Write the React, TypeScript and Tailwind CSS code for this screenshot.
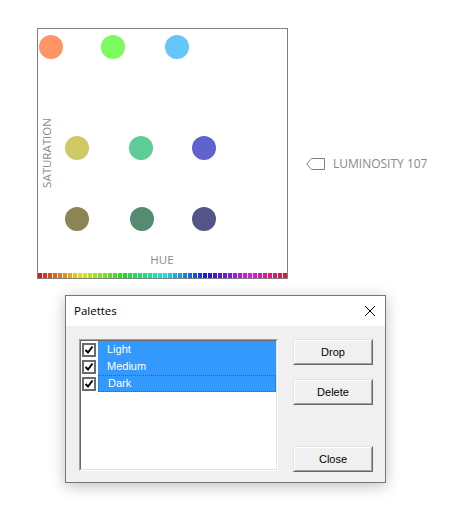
import React from "react";

const hues = Array.from({ length: 50 }, (_, i) => i * 7.2);

function Check() {
  return (
    <svg width="10" height="10" viewBox="0 0 10 10" className="block">
      <path d="M1.5 5 L4 7.5 L8.5 1.5" fill="none" stroke="#000" strokeWidth="2" />
    </svg>
  );
}

function Btn({ label }: { label: string }) {
  return (
    <div className="w-[80px] h-[26px] border-t border-l border-[#e3e3e3] border-r border-b border-r-[#696969] border-b-[#696969]">
      <div className="w-full h-full border-t border-l border-white border-r border-b border-r-[#a0a0a0] border-b-[#a0a0a0] bg-[#f0f0f0] flex items-center justify-center text-[11px] text-black [font-family:'Liberation_Sans',Arial,sans-serif]">
        {label}
      </div>
    </div>
  );
}

function Row({ label, focus }: { label: string; focus?: boolean }) {
  return (
    <div className="flex h-[17px] items-center">
      <div className="w-[14px] h-[14px] border-2 border-[#6b6b6b] bg-white flex items-center justify-center">
        <Check />
      </div>
      <div
        className={
          "ml-[2px] flex-1 h-[17px] bg-[#3399ff] text-white text-[11px] flex items-center pl-[9px] [font-family:'Liberation_Sans',Arial,sans-serif] " +
          (focus ? "border border-dotted border-[#8a5416]" : "")
        }
      >
        {label}
      </div>
    </div>
  );
}

export default function App() {
  return (
    <div className="w-[470px] h-[510px] bg-white overflow-hidden [font-family:'Open_Sans',sans-serif]">
      <div className="flex items-start pt-[28px] pl-[37px]">
        <div className="w-[251px] h-[251px] border border-[#808080] flex flex-col">
          <div className="relative flex-1">
            <div className="absolute left-[1px] top-[6px] w-[24px] h-[24px] rounded-full bg-[#ff9566]" />
            <div className="absolute left-[63px] top-[6px] w-[24px] h-[24px] rounded-full bg-[#7cfb5e]" />
            <div className="absolute left-[127px] top-[6px] w-[24px] h-[24px] rounded-full bg-[#64c6f9]" />
            <div className="absolute left-[27px] top-[107px] w-[24px] h-[24px] rounded-full bg-[#cfc966]" />
            <div className="absolute left-[91px] top-[107px] w-[24px] h-[24px] rounded-full bg-[#5fcb96]" />
            <div className="absolute left-[154px] top-[107px] w-[24px] h-[24px] rounded-full bg-[#6063ce]" />
            <div className="absolute left-[27px] top-[178px] w-[24px] h-[24px] rounded-full bg-[#8a8552]" />
            <div className="absolute left-[92px] top-[178px] w-[24px] h-[24px] rounded-full bg-[#558b70]" />
            <div className="absolute left-[154px] top-[178px] w-[24px] h-[24px] rounded-full bg-[#545489]" />
            <div className="absolute left-[-31px] top-[116px] w-[80px] h-[16px] leading-[16px] text-center text-[11.5px] text-[#8a8a8a] -rotate-90">
              SATURATION
            </div>
            <div className="absolute left-[104px] top-[223px] w-[40px] h-[16px] leading-[16px] text-center text-[11.5px] text-[#8a8a8a]">
              HUE
            </div>
          </div>
          <div className="h-[5px] flex gap-[1px]">
            {hues.map((h) => (
              <div key={h} className="w-[4px] h-[5px]" style={{ backgroundColor: `hsl(${h}, 82%, 49%)` }} />
            ))}
          </div>
        </div>
        <div className="ml-[18px] mt-[128px] flex items-center h-[16px]">
          <svg width="19" height="12" viewBox="0 0 19 12" className="block">
            <path d="M18.5 0.5 H5.5 L0.7 6 L5.5 11.5 H18.5 Z" fill="none" stroke="#808080" strokeWidth="1" />
          </svg>
          <span className="ml-[8px] text-[12px] text-[#8a8a8a] leading-[16px]">LUMINOSITY 107</span>
        </div>
      </div>

      <div className="ml-[65px] mt-[16px] w-[321px] h-[188px] border border-[#777777] shadow-[0_3px_14px_rgba(0,0,0,0.25)] flex flex-col">
        <div className="h-[30px] bg-white flex items-center justify-between pl-[8px] pr-[10px]">
          <span className="text-[11.5px] text-black">Palettes</span>
          <svg width="10" height="10" viewBox="0 0 10 10" className="block">
            <path d="M0 0 L10 10 M10 0 L0 10" stroke="#000" strokeWidth="1" />
          </svg>
        </div>
        <div className="flex-1 bg-[#f0f0f0] flex pl-[13px] pt-[13px] pb-[10px]">
          <div className="w-[199px] h-[132px] border-t border-l border-[#a0a0a0] border-r border-b border-r-white border-b-white">
            <div className="w-full h-full bg-white border-t border-l border-[#696969] border-r border-b border-r-[#e3e3e3] border-b-[#e3e3e3] pl-[1px]">
              <Row label="Light" />
              <Row label="Medium" />
              <Row label="Dark" focus />
            </div>
          </div>
          <div className="ml-[15px] flex flex-col">
            <Btn label="Drop" />
            <div className="mt-[14px]">
              <Btn label="Delete" />
            </div>
            <div className="mt-auto">
              <Btn label="Close" />
            </div>
          </div>
        </div>
      </div>
    </div>
  );
}
